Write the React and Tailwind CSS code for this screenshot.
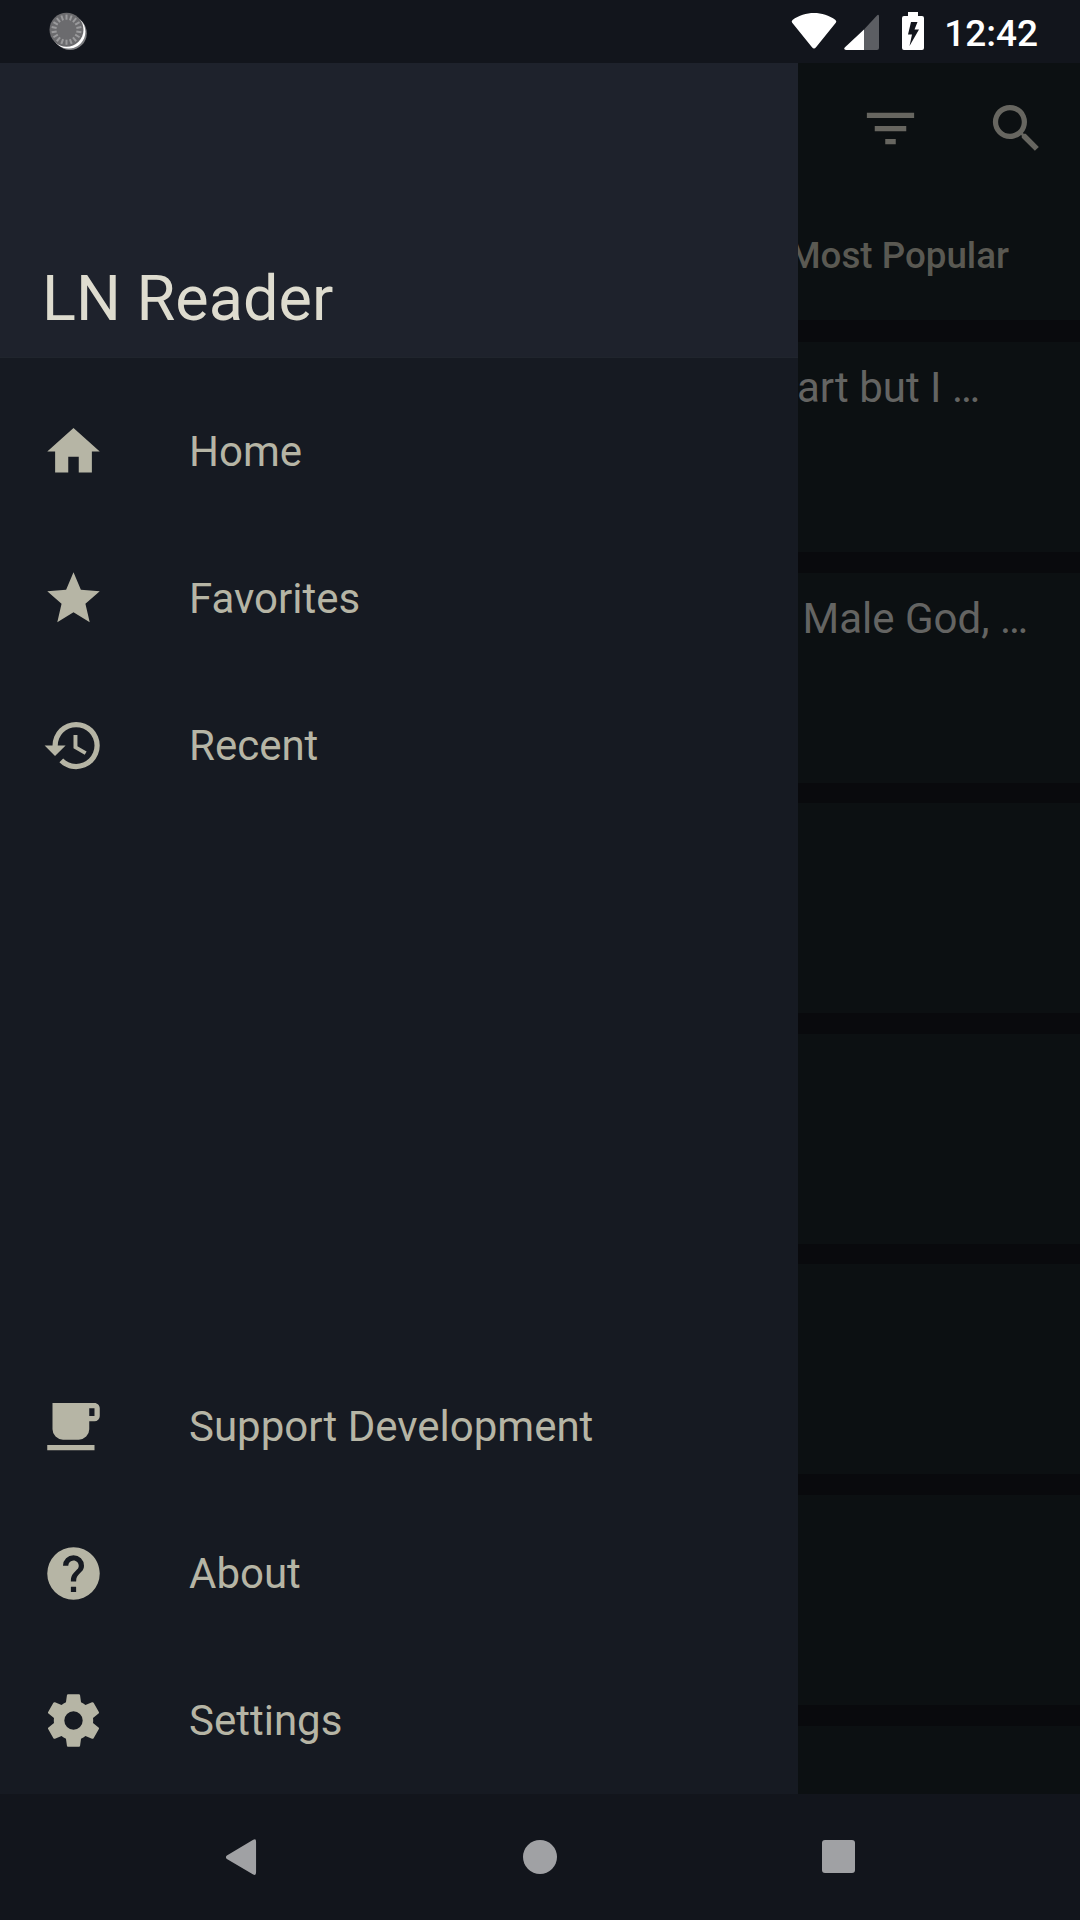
const PATHS = {
  home: "M10,20V14H14V20H19V12H22L12,3L2,12H5V20H10Z",
  star: "M12,17.27L18.18,21L16.54,13.97L22,9.24L14.81,8.62L12,2L9.19,8.62L2,9.24L7.45,13.97L5.82,21L12,17.27Z",
  history:
    "M13.5,8H12V13L16.28,15.54L17,14.33L13.5,12.25V8M13,3A9,9 0 0,0 4,12H1L4.96,16.03L9,12H6A7,7 0 0,1 13,5A7,7 0 0,1 20,12A7,7 0 0,1 13,19C11.07,19 9.32,18.21 8.06,16.94L6.64,18.36C8.27,20 10.5,21 13,21A9,9 0 0,0 22,12A9,9 0 0,0 13,3",
  coffee:
    "M2,21H20V19H2M20,8H18V5H20M20,3H4V13A4,4 0 0,0 8,17H14A4,4 0 0,0 18,13V10H20A2,2 0 0,0 22,8V5C22,3.89 21.1,3 20,3Z",
  help: "M15.07,11.25L14.17,12.17C13.45,12.89 13,13.5 13,15H11V14.5C11,13.39 11.45,12.39 12.17,11.67L13.41,10.41C13.78,10.05 14,9.55 14,9C14,7.89 13.1,7 12,7A2,2 0 0,0 10,9H8A4,4 0 0,1 12,5A4,4 0 0,1 16,9C16,9.88 15.64,10.67 15.07,11.25M13,19H11V17H13M12,2A10,10 0 0,0 2,12A10,10 0 0,0 12,22A10,10 0 0,0 22,12C22,6.47 17.5,2 12,2Z",
  cog: "M12,15.5A3.5,3.5 0 0,1 8.5,12A3.5,3.5 0 0,1 12,8.5A3.5,3.5 0 0,1 15.5,12A3.5,3.5 0 0,1 12,15.5M19.43,12.97C19.47,12.65 19.5,12.33 19.5,12C19.5,11.67 19.47,11.34 19.43,11L21.54,9.37C21.73,9.22 21.78,8.95 21.66,8.73L19.66,5.27C19.54,5.05 19.27,4.96 19.05,5.05L16.56,6.05C16.04,5.66 15.5,5.32 14.87,5.07L14.5,2.42C14.46,2.18 14.25,2 14,2H10C9.75,2 9.54,2.18 9.5,2.42L9.13,5.07C8.5,5.32 7.96,5.66 7.44,6.05L4.95,5.05C4.73,4.96 4.46,5.05 4.34,5.27L2.34,8.73C2.21,8.95 2.27,9.22 2.46,9.37L4.57,11C4.53,11.34 4.5,11.67 4.5,12C4.5,12.33 4.53,12.65 4.57,12.97L2.46,14.63C2.27,14.78 2.21,15.05 2.34,15.27L4.34,18.73C4.46,18.95 4.73,19.03 4.95,18.95L7.44,17.94C7.96,18.34 8.5,18.68 9.13,18.93L9.5,21.58C9.54,21.82 9.75,22 10,22H14C14.25,22 14.46,21.82 14.5,21.58L14.87,18.93C15.5,18.67 16.04,18.34 16.56,17.94L19.05,18.95C19.27,19.03 19.54,18.95 19.66,18.73L21.66,15.27C21.78,15.05 21.73,14.78 21.54,14.63L19.43,12.97Z",
  filter: "M6,13H18V11H6M3,6V8H21V6M10,18H14V16H10V18Z",
  search:
    "M9.5,3A6.5,6.5 0 0,1 16,9.5C16,11.11 15.41,12.59 14.44,13.73L14.71,14H15.5L20.5,19L19,20.5L14,15.5V14.71L13.73,14.44C12.59,15.41 11.11,16 9.5,16A6.5,6.5 0 0,1 3,9.5A6.5,6.5 0 0,1 9.5,3M9.5,5C7,5 5,7 5,9.5C5,12 7,14 9.5,14C12,14 14,12 14,9.5C14,7 12,5 9.5,5Z",
};

function Icon({ name }) {
  return (
    <svg viewBox="0 0 24 24" className="size-[63px] shrink-0 fill-current">
      <path fillRule="evenodd" d={PATHS[name]} />
    </svg>
  );
}

function SyncBadge() {
  const ticks = Array.from({ length: 18 }, (_, i) => i * 20);
  return (
    <svg viewBox="0 0 40 40" className="ml-[48px] size-10">
      <circle cx="22" cy="23.2" r="16.8" fill="#7c7d80" />
      <circle cx="20.6" cy="21.8" r="16.8" fill="#fff" />
      <circle cx="18.5" cy="19.7" r="17" fill="#6b6b6e" />
      {ticks.map((a) => (
        <path key={a} d="M18.5 4.6V9.700" stroke="#9a9a9c" strokeWidth="2" transform={`rotate(${a} 18.5 19.7)`} />
      ))}
    </svg>
  );
}

function StatusBar() {
  return (
    <div className="flex h-[63px] shrink-0 items-start justify-between bg-[#12151c] pt-[10px]">
      <SyncBadge />
      <div className="flex pr-[42px] text-white">
        <svg viewBox="0 0 46 40" className="h-10 w-[46px]">
          <path fill="#fff" d="M1.2 12.8Q0 11.4 1.5 10C14 .7 32 .7 44.500 10Q46 11.400 44.800 12.800L25 37.200Q23 40 21 37.200Z" />
        </svg>
        <svg viewBox="0 0 36 40" className="ml-[7px] h-10 w-9">
          <path fill="#5c5e63" d="M20 19.500L32.500 6Q35 3.500 35 6.500V38Q35 40 33 40H20Z" />
          <path fill="#fff" d="M20 19.500V40H2Q-1 39.500 1 37.300Z" />
        </svg>
        <svg viewBox="0 0 22 38" className="ml-[22px] mt-[2px] h-[38px] w-[22px]">
          <path
            fill="#fff"
            fillRule="evenodd"
            d="M6 0H16V4H20Q22 4 22 6V36Q22 38 20 38H2Q0 38 0 36V6Q0 4 2 4H6ZM9 10L6 22.500H10L7.500 34L17 17.500H12.500L15.500 10Z"
          />
        </svg>
        <span className="ml-[20px] mt-[2px] text-[37px] leading-[44px] font-medium">12:42</span>
      </div>
    </div>
  );
}

function DrawerItem({ icon, label }) {
  return (
    <li className="flex h-[147px] items-center gap-[84px] pl-[42px]">
      <Icon name={icon} />
      <span className="text-[42px] leading-[56px]">{label}</span>
    </li>
  );
}

function Drawer() {
  return (
    <nav className="flex w-[798px] shrink-0 flex-col bg-[#161a22] text-[#b6b5a5]">
      <header className="flex h-[295px] shrink-0 items-end border-b border-[#20252d] bg-[#1e222c] pb-[21px] pl-[42px]">
        <h1 className="text-[63px] leading-[74px] text-[#dedccf]">LN Reader</h1>
      </header>
      <ul className="pt-[20px]">
        <DrawerItem icon="home" label="Home" />
        <DrawerItem icon="star" label="Favorites" />
        <DrawerItem icon="history" label="Recent" />
      </ul>
      <ul className="mt-auto">
        <DrawerItem icon="coffee" label="Support Development" />
        <DrawerItem icon="help" label="About" />
        <DrawerItem icon="cog" label="Settings" />
      </ul>
    </nav>
  );
}

function Card({ children }) {
  return (
    <div className="flex h-[210px] shrink-0 justify-end bg-[#0c1012] pt-[18px] text-[42px] leading-[56px] whitespace-nowrap text-[#646462]">
      {children}
    </div>
  );
}

function Browse() {
  return (
    <main className="flex min-w-0 flex-1 flex-col overflow-hidden bg-[#090a0d]">
      <div className="h-[257px] shrink-0 bg-[#0c1012]">
        <div className="flex h-[130px] items-center justify-end gap-[63px] pr-[32px] text-[#676660]">
          <Icon name="filter" />
          <Icon name="search" />
        </div>
        <div className="flex justify-end pt-[41px] pr-[71px] text-[36.750px] leading-[44px] font-medium whitespace-nowrap text-[#5a5952]">
          Most Popular
        </div>
      </div>
      <div className="flex flex-col gap-[20.600px] pt-[22px]">
        <Card>
          <span className="pr-[100px]">art but I …</span>
        </Card>
        <Card>
          <span className="pr-[52px]">Male God, …</span>
        </Card>
        <Card />
        <Card />
        <Card />
        <Card />
        <Card />
      </div>
    </main>
  );
}

function NavBar() {
  return (
    <div className="flex h-[126px] shrink-0 items-center justify-between bg-[#12151c] pr-[225px] pb-px pl-[225px]">
      <svg viewBox="0 0 34 36" preserveAspectRatio="none" className="h-9 w-8 fill-[#a0a1a4]">
        <path d="M2 16.500Q0 18 2 20L30 35.500Q33 37 33 33.500V2.500Q33 -1 30 .8Z" />
      </svg>
      <div className="size-[34px] rounded-full bg-[#a0a1a4]" />
      <div className="size-[33px] rounded-[3px] bg-[#a0a1a4]" />
    </div>
  );
}

export default function App() {
  return (
    <div className="flex h-[1920px] w-[1080px] flex-col overflow-hidden bg-[#12151c] font-[Roboto,sans-serif]">
      <StatusBar />
      <div className="flex h-[1731px] shrink-0 overflow-hidden">
        <Drawer />
        <Browse />
      </div>
      <NavBar />
    </div>
  );
}
